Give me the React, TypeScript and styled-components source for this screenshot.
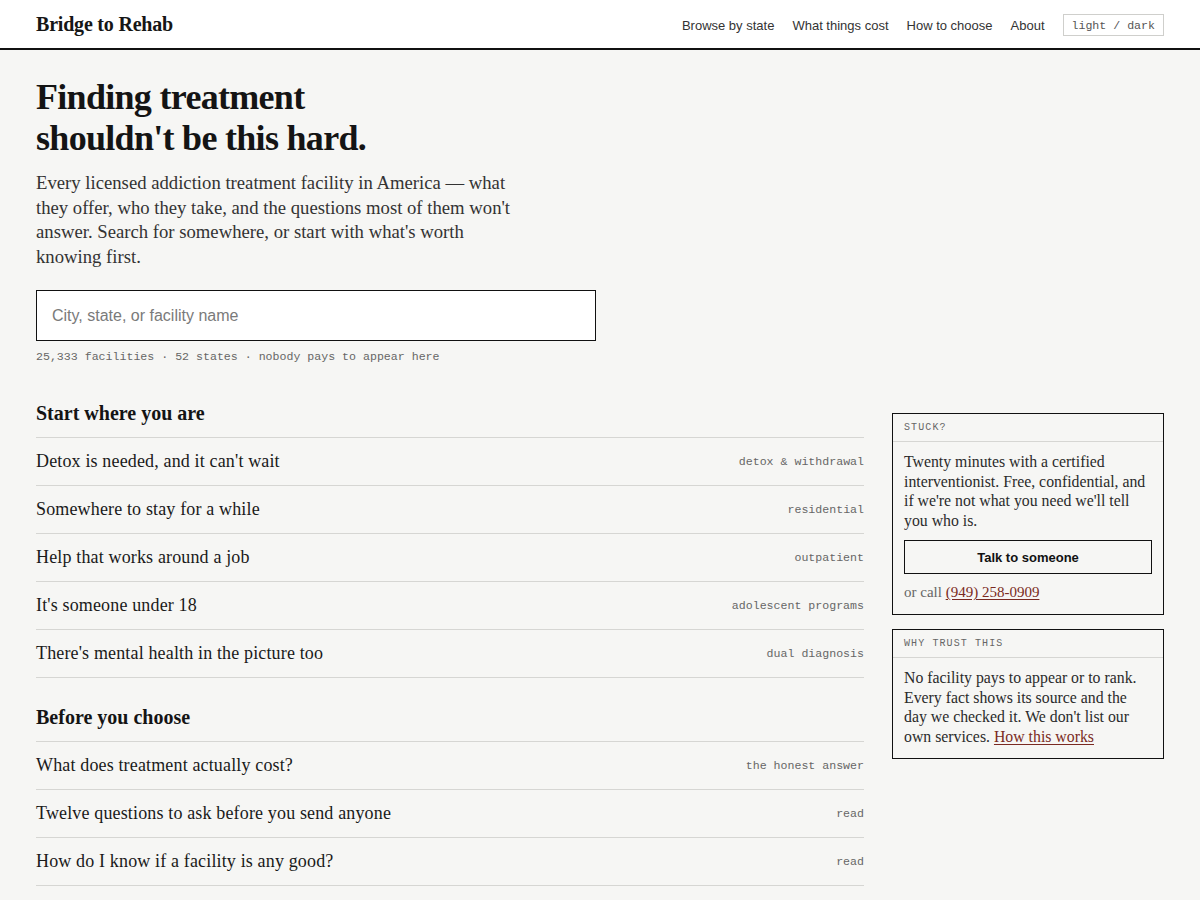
import * as React from 'react';
import styled, {createGlobalStyle} from 'styled-components';

const SERIF = `"Liberation Serif", "DejaVu Serif", serif`;
const SANS = `"Liberation Sans", Roboto, Arial, sans-serif`;
const MONO = `"Liberation Mono", "DejaVu Sans Mono", monospace`;

const GlobalStyle = createGlobalStyle`
  * { box-sizing: border-box; }
  body {
    margin: 0;
    background: #f6f6f4;
    color: #161616;
    font-family: ${SERIF};
  }
`;

type Row = {label: string; tag: string};

const startRows: Row[] = [
  {label: "Detox is needed, and it can't wait", tag: 'detox & withdrawal'},
  {label: 'Somewhere to stay for a while', tag: 'residential'},
  {label: 'Help that works around a job', tag: 'outpatient'},
  {label: "It's someone under 18", tag: 'adolescent programs'},
  {label: "There's mental health in the picture too", tag: 'dual diagnosis'},
];

const chooseRows: Row[] = [
  {label: 'What does treatment actually cost?', tag: 'the honest answer'},
  {label: 'Twelve questions to ask before you send anyone', tag: 'read'},
  {label: 'How do I know if a facility is any good?', tag: 'read'},
];

const App = () => {
  return (
    <>
      <GlobalStyle />
      <Header>
        <Logo>Bridge to Rehab</Logo>
        <Nav>
          <NavLink>Browse by state</NavLink>
          <NavLink>What things cost</NavLink>
          <NavLink>How to choose</NavLink>
          <NavLink>About</NavLink>
          <ThemeToggle>light / dark</ThemeToggle>
        </Nav>
      </Header>

      <Page>
        <Hero>
          <Headline>
            Finding treatment
            <br />
            shouldn't be this hard.
          </Headline>
          <Lede>
            Every licensed addiction treatment facility in America — what they offer, who they take,
            and the questions most of them won't answer. Search for somewhere, or start with what's
            worth knowing first.
          </Lede>
          <SearchInput placeholder="City, state, or facility name" />
          <Meta>25,333 facilities · 52 states · nobody pays to appear here</Meta>
        </Hero>

        <Columns>
          <div>
            <Section>
              <SectionTitle>Start where you are</SectionTitle>
              <List>
                {startRows.map((row) => (
                  <ListRow key={row.label}>
                    <RowLabel>{row.label}</RowLabel>
                    <RowTag>{row.tag}</RowTag>
                  </ListRow>
                ))}
              </List>
            </Section>
            <Section>
              <SectionTitle>Before you choose</SectionTitle>
              <List>
                {chooseRows.map((row) => (
                  <ListRow key={row.label}>
                    <RowLabel>{row.label}</RowLabel>
                    <RowTag>{row.tag}</RowTag>
                  </ListRow>
                ))}
              </List>
            </Section>
          </div>

          <Sidebar>
            <Card>
              <CardHead>Stuck?</CardHead>
              <CardBody>
                <CardText>
                  Twenty minutes with a certified interventionist. Free, confidential, and if we're
                  not what you need we'll tell you who is.
                </CardText>
                <TalkButton>Talk to someone</TalkButton>
                <CallLine>
                  or call <InlineLink>(949) 258-0909</InlineLink>
                </CallLine>
              </CardBody>
            </Card>
            <Card>
              <CardHead>Why trust this</CardHead>
              <CardBody>
                <CardText>
                  No facility pays to appear or to rank. Every fact shows its source and the day we
                  checked it. We don't list our own services. <InlineLink>How this works</InlineLink>
                </CardText>
              </CardBody>
            </Card>
          </Sidebar>
        </Columns>
      </Page>
    </>
  );
};

const Header = styled.header`
  display: flex;
  align-items: center;
  justify-content: space-between;
  height: 50px;
  padding: 1px 36px 0;
  background: #ffffff;
  border-bottom: 2px solid #111;
`;

const Logo = styled.a`
  font-family: ${SERIF};
  font-size: 20px;
  font-weight: 700;
  color: #161616;
  letter-spacing: -0.2px;
`;

const Nav = styled.nav`
  display: flex;
  align-items: center;
  gap: 18px;
  padding-top: 1px;
`;

const NavLink = styled.a`
  font-family: ${SANS};
  font-size: 13px;
  color: #333;
`;

const ThemeToggle = styled.button`
  height: 22px;
  padding: 0 8px;
  border: 1px solid #cfcfcc;
  background: #ffffff;
  font-family: ${MONO};
  font-size: 11.6px;
  color: #555;
`;

const Page = styled.main`
  padding: 0 36px;
`;

const Hero = styled.section`
  padding-top: 27px;
`;

const Headline = styled.h1`
  margin: 0;
  font-family: ${SERIF};
  font-size: 36px;
  font-weight: 700;
  line-height: 41px;
  letter-spacing: -0.7px;
  color: #141414;
`;

const Lede = styled.p`
  margin: 12px 0 0;
  max-width: 490px;
  font-size: 18.7px;
  line-height: 24.5px;
  color: #333;
`;

const SearchInput = styled.input`
  display: block;
  width: 560px;
  height: 51px;
  margin-top: 21px;
  padding: 0 15px;
  border: 1px solid #111;
  border-radius: 0;
  background: #ffffff;
  font-family: ${SANS};
  font-size: 16px;
  color: #111;
  outline: none;
  &::placeholder {
    color: #7a7a7a;
  }
`;

const Meta = styled.div`
  margin-top: 9px;
  font-family: ${MONO};
  font-size: 11.6px;
  color: #666;
`;

const Columns = styled.div`
  display: grid;
  grid-template-columns: 828px 272px;
  gap: 28px;
  margin-top: 37px;
  align-items: start;
`;

const Section = styled.section`
  margin-bottom: 26px;
`;

const SectionTitle = styled.h2`
  margin: 0;
  height: 37px;
  font-family: ${SERIF};
  font-size: 20px;
  font-weight: 700;
  line-height: 26px;
  color: #141414;
`;

const List = styled.ul`
  margin: 0;
  padding: 0;
  list-style: none;
  border-top: 1px solid #d6d6d3;
`;

const ListRow = styled.li`
  display: flex;
  align-items: center;
  justify-content: space-between;
  height: 48px;
  border-bottom: 1px solid #d6d6d3;
`;

const RowLabel = styled.span`
  font-size: 18px;
  letter-spacing: 0.15px;
  color: #1a1a1a;
`;

const RowTag = styled.span`
  font-family: ${MONO};
  font-size: 11.6px;
  color: #666;
`;

const Sidebar = styled.aside`
  display: flex;
  flex-direction: column;
  gap: 14px;
  margin-top: 13px;
`;

const Card = styled.div`
  border: 1px solid #111;
  background: #f6f6f4;
`;

const CardHead = styled.div`
  height: 28px;
  padding: 0 11px;
  display: flex;
  align-items: center;
  border-bottom: 1px solid #d6d6d3;
  font-family: ${MONO};
  font-size: 10px;
  letter-spacing: 1.1px;
  text-transform: uppercase;
  color: #666;
`;

const CardBody = styled.div`
  padding: 10px 11px 12px;
`;

const CardText = styled.p`
  margin: 0;
  max-width: 246px;
  font-size: 15.8px;
  line-height: 19.5px;
  color: #2a2a2a;
`;

const TalkButton = styled.button`
  display: block;
  width: 100%;
  height: 34px;
  margin-top: 10px;
  border: 1px solid #111;
  background: #f6f6f4;
  font-family: ${SANS};
  font-size: 13px;
  font-weight: 700;
  color: #111;
`;

const CallLine = styled.p`
  margin: 9px 0 0;
  font-size: 15px;
  line-height: 19px;
  color: #666;
`;

const InlineLink = styled.a`
  color: #7a2a22;
  text-decoration: underline;
  text-underline-offset: 2px;
`;

export default App;
